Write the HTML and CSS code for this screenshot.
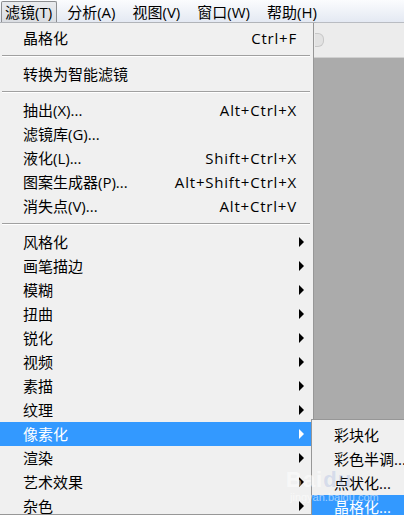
FILE: index.html
```html
<!DOCTYPE html>
<html lang="zh-CN">
<head>
  <meta charset="UTF-8">
  <meta name="viewport" content="width=device-width, initial-scale=1.0">
  <title>滤镜菜单</title>
  <link rel="stylesheet" href="styles.css">
</head>
<body>
  <div class="menubar">
    <span class="menubar-item active">滤镜(T)</span>
    <span class="menubar-item">分析(A)</span>
    <span class="menubar-item">视图(V)</span>
    <span class="menubar-item">窗口(W)</span>
    <span class="menubar-item">帮助(H)</span>
  </div>

  <div class="workspace">
    <ul class="menu">
      <li class="menu-item"><span>晶格化</span><span class="key">Ctrl+F</span></li>
      <li class="separator"></li>
      <li class="menu-item"><span>转换为智能滤镜</span></li>
      <li class="separator"></li>
      <li class="menu-item"><span>抽出(X)...</span><span class="key">Alt+Ctrl+X</span></li>
      <li class="menu-item"><span>滤镜库(G)...</span></li>
      <li class="menu-item"><span>液化(L)...</span><span class="key">Shift+Ctrl+X</span></li>
      <li class="menu-item"><span>图案生成器(P)...</span><span class="key">Alt+Shift+Ctrl+X</span></li>
      <li class="menu-item"><span>消失点(V)...</span><span class="key">Alt+Ctrl+V</span></li>
      <li class="separator"></li>
      <li class="menu-item sub"><span>风格化</span></li>
      <li class="menu-item sub"><span>画笔描边</span></li>
      <li class="menu-item sub"><span>模糊</span></li>
      <li class="menu-item sub"><span>扭曲</span></li>
      <li class="menu-item sub"><span>锐化</span></li>
      <li class="menu-item sub"><span>视频</span></li>
      <li class="menu-item sub"><span>素描</span></li>
      <li class="menu-item sub"><span>纹理</span></li>
      <li class="menu-item sub selected"><span>像素化</span></li>
      <li class="menu-item sub"><span>渲染</span></li>
      <li class="menu-item sub"><span>艺术效果</span></li>
      <li class="menu-item sub"><span>杂色</span></li>
    </ul>

    <div class="canvas-area">
      <div class="options-bar"><span class="tool-icon"></span></div>
    </div>

    <ul class="submenu">
      <li class="menu-item"><span>彩块化</span></li>
      <li class="menu-item"><span>彩色半调...</span></li>
      <li class="menu-item"><span>点状化...</span></li>
      <li class="menu-item selected"><span>晶格化...</span></li>
    </ul>

    <div class="watermark">
      <span class="wm-logo">Bai<b>du</b></span>
      <span class="wm-url">jingyan.baidu.com</span>
    </div>
  </div>
</body>
</html>
```

FILE: styles.css
```css
/* Base */
body {
  margin: 0;
  height: 515px;
  overflow: hidden;
  background-color: #ababab;
  font-family: "Open Sans", "Noto Sans CJK SC", sans-serif;
  font-size: 15px;
  color: #000;
}

ul {
  list-style: none;
  margin: 0;
  padding: 0;
}

/* Menu bar */
.menubar {
  height: 22px;
  display: flex;
  align-items: stretch;
  padding-left: 1px;
  background: linear-gradient(#fbfcfe, #e4e9f3);
  border-bottom: 1px solid #b9bcc2;
}

.menubar-item {
  display: flex;
  align-items: center;
  padding: 0 6px 0 9px;
  line-height: 20px;
  border: 1px solid transparent;
  border-bottom: none;
}

.menubar-item.active {
  padding: 0 4px 0 3px;
  margin-top: 1px;
  border-color: #8c8e91;
  border-radius: 2px 2px 0 0;
  background: linear-gradient(#e9ebee, #dadde2);
}

/* Workspace */
.workspace {
  position: relative;
  display: flex;
  height: 492px;
}

.canvas-area {
  flex: 1;
  background-color: #ababab;
}

.options-bar {
  height: 34px;
  background-color: #ececec;
  border-bottom: 1px solid #d0d0d0;
  position: relative;
}

.tool-icon {
  position: absolute;
  left: 1px;
  top: 10px;
  width: 8px;
  height: 12px;
  border-radius: 0 6px 6px 0;
  border: 1px solid #c8c8c8;
  border-left: none;
  background: #e2e2e2;
}

/* Drop-down menu */
.menu {
  width: 314px;
  margin-left: -2px;
  padding-top: 3px;
  background-color: #f0f0f0;
  border: 1px solid #979797;
  border-top: none;
  box-shadow: 2px 0 1px #8d8d8d;
}

.menu-item {
  height: 24px;
  display: flex;
  align-items: center;
  justify-content: space-between;
  padding: 0 16px 0 24px;
  line-height: 24px;
  white-space: nowrap;
}

.menu-item .key {
  letter-spacing: 0.8px;
}

.menu-item.sub {
  position: relative;
}

.menu-item.sub::after {
  content: "";
  position: absolute;
  right: 9px;
  top: 7px;
  border-style: solid;
  border-width: 5px 0 5px 5px;
  border-color: transparent transparent transparent #000;
}

.menu-item.selected {
  background-color: #3399ff;
  color: #fff;
}

.menu-item.selected::after {
  border-left-color: #fff;
}

.separator {
  height: 0;
  margin: 5px 3px 5px 3px;
  border-top: 1px solid #a0a0a0;
  border-bottom: 1px solid #ffffff;
}

/* Submenu */
.submenu {
  position: absolute;
  left: 311px;
  top: 396px;
  width: 120px;
  padding-top: 3px;
  background-color: #f0f0f0;
  border: 1px solid #979797;
}

.submenu .menu-item {
  padding-left: 22px;
}

/* Watermark */
.watermark {
  position: absolute;
  left: 286px;
  top: 446px;
  display: flex;
  flex-direction: column;
  color: rgba(255, 255, 255, 0.55);
  pointer-events: none;
}

.wm-logo {
  font-family: "Liberation Sans", sans-serif;
  font-size: 22px;
  font-weight: bold;
  line-height: 22px;
  letter-spacing: 1px;
}

.wm-logo b {
  color: rgba(150, 170, 220, 0.3);
}

.wm-url {
  font-family: "Liberation Sans", sans-serif;
  font-size: 11px;
  line-height: 12px;
  margin-left: 4px;
}
```
